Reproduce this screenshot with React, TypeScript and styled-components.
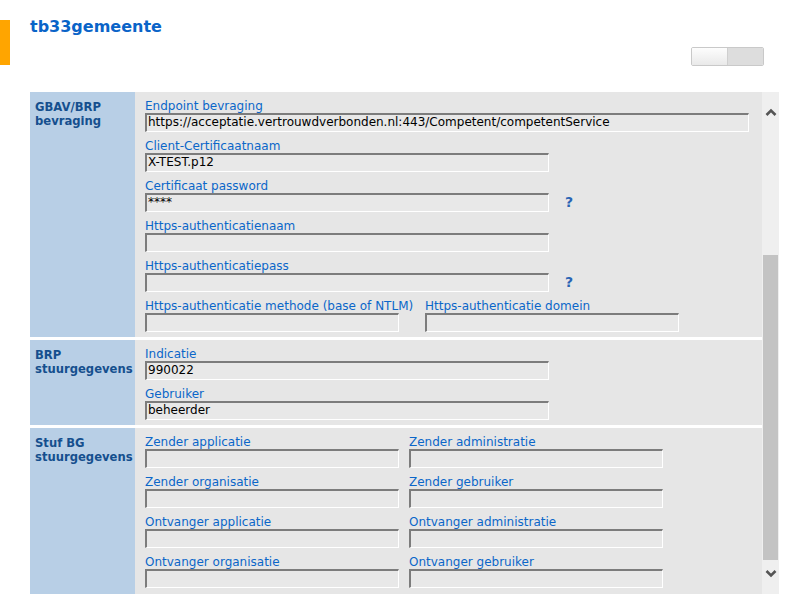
import React from "react";
import styled, { createGlobalStyle } from "styled-components";

const GlobalStyle = createGlobalStyle`
  html, body { margin: 0; padding: 0; background: #ffffff; }
  body { font-family: "DejaVu Sans", Verdana, sans-serif; }
  * { box-sizing: border-box; }
`;

const Page = styled.div`
  width: 792px;
  height: 602px;
  overflow: hidden;
  background: #ffffff;
`;

const Header = styled.div`
  display: flex;
  margin-top: 20px;
`;

const AccentBar = styled.div`
  width: 10px;
  height: 45px;
  background: #ffa500;
  flex: none;
`;

const HeaderMain = styled.div`
  flex: 1;
  display: flex;
  flex-direction: column;
  padding-left: 20px;
  padding-right: 28px;
`;

const Title = styled.h1`
  margin: -3px 0 0 0;
  font-family: "DejaVu Sans", Verdana, sans-serif;
  font-size: 16px;
  line-height: 20px;
  font-weight: bold;
  color: #0a64c8;
`;

const Toggle = styled.div`
  align-self: flex-end;
  margin-top: 10px;
  width: 73px;
  height: 19px;
  display: flex;
  border: 1px solid #c9c9c9;
  border-radius: 2px;
  overflow: hidden;
`;

const ToggleHalf = styled.div<{ $active?: boolean }>`
  flex: 1;
  background: ${(p) =>
    p.$active ? "linear-gradient(#fdfdfd, #e9e9e9)" : "#dddddd"};
  border-right: ${(p) => (p.$active ? "1px solid #cfcfcf" : "none")};
`;

const Panel = styled.div`
  margin: 26px 0 0 30px;
  width: 749px;
  height: 502px;
  display: flex;
`;

const Content = styled.div`
  flex: 1;
  display: flex;
  flex-direction: column;
  gap: 3px;
  background: #ffffff;
  overflow: hidden;
`;

const Section = styled.div<{ $grow?: boolean }>`
  display: grid;
  grid-template-columns: 105px 1fr;
  flex: ${(p) => (p.$grow ? "1" : "none")};
`;

const SectionLabel = styled.div`
  background: #b8cfe6;
  padding: 8px 0 0 5px;
  font-size: 11.6px;
  line-height: 14px;
  font-weight: bold;
  color: #154f8e;
  white-space: nowrap;
`;

const Fields = styled.div`
  background: #e6e6e6;
  padding: 6px 10px 5px 10px;
  display: flex;
  flex-direction: column;
  gap: 6px;
`;

const Row = styled.div<{ $gap?: number }>`
  display: flex;
  align-items: flex-end;
  gap: ${(p) => p.$gap ?? 0}px;
`;

const Field = styled.div<{ $width: number }>`
  width: ${(p) => p.$width}px;
  display: flex;
  flex-direction: column;
  flex: none;
`;

const FieldLabel = styled.label`
  font-size: 12px;
  line-height: 17px;
  height: 15px;
  color: #0b66c9;
  white-space: nowrap;
`;

const Input = styled.div`
  height: 19px;
  background: #e8e8e8;
  border-top: 2px solid #7c7c7c;
  border-left: 2px solid #7c7c7c;
  border-right: 1px solid #ffffff;
  border-bottom: 1px solid #ffffff;
  padding: 0 0 0 1px;
  font-size: 12px;
  line-height: 15px;
  color: #000000;
  white-space: nowrap;
  overflow: hidden;
`;

const Help = styled.span`
  margin-left: 16px;
  height: 19px;
  line-height: 19px;
  font-size: 14px;
  font-weight: bold;
  color: #2a64b4;
`;

const Scrollbar = styled.div`
  width: 17px;
  flex: none;
  background: #efefef;
  display: flex;
  flex-direction: column;
  align-items: center;
  padding: 16px 0 16px 0;
`;

const Track = styled.div`
  flex: 1;
  width: 15px;
  display: flex;
  flex-direction: column;
  justify-content: flex-end;
  padding-bottom: 8px;
`;

const Thumb = styled.div`
  height: 305px;
  background: #c3c3c3;
`;

const Chevron = ({ down }: { down?: boolean }) => (
  <svg width="12" height="10" viewBox="0 0 12 10">
    <polyline
      points={down ? "1.5,3 6,7.5 10.5,3" : "1.5,7 6,2.5 10.5,7"}
      fill="none"
      stroke="#555555"
      strokeWidth="2.6"
    />
  </svg>
);

type F = { label: string; value?: string; width: number };

const TextField = ({ label, value, width }: F) => (
  <Field $width={width}>
    <FieldLabel>{label}</FieldLabel>
    <Input>{value}</Input>
  </Field>
);

export default function App() {
  return (
    <Page>
      <GlobalStyle />
      <Header>
        <AccentBar />
        <HeaderMain>
          <Title>tb33gemeente</Title>
          <Toggle>
            <ToggleHalf $active />
            <ToggleHalf />
          </Toggle>
        </HeaderMain>
      </Header>
      <Panel>
        <Content>
          <Section>
            <SectionLabel>
              GBAV/BRP
              <br />
              bevraging
            </SectionLabel>
            <Fields>
              <Row>
                <TextField
                  label="Endpoint bevraging"
                  value="https://acceptatie.vertrouwdverbonden.nl:443/Competent/competentService"
                  width={604}
                />
              </Row>
              <Row>
                <TextField label="Client-Certificaatnaam" value="X-TEST.p12" width={404} />
              </Row>
              <Row>
                <TextField label="Certificaat password" value="****" width={404} />
                <Help>?</Help>
              </Row>
              <Row>
                <TextField label="Https-authenticatienaam" width={404} />
              </Row>
              <Row>
                <TextField label="Https-authenticatiepass" width={404} />
                <Help>?</Help>
              </Row>
              <Row $gap={26}>
                <TextField label="Https-authenticatie methode (base of NTLM)" width={254} />
                <TextField label="Https-authenticatie domein" width={254} />
              </Row>
            </Fields>
          </Section>
          <Section>
            <SectionLabel>
              BRP
              <br />
              stuurgegevens
            </SectionLabel>
            <Fields>
              <Row>
                <TextField label="Indicatie" value="990022" width={404} />
              </Row>
              <Row>
                <TextField label="Gebruiker" value="beheerder" width={404} />
              </Row>
            </Fields>
          </Section>
          <Section $grow>
            <SectionLabel>
              Stuf BG
              <br />
              stuurgegevens
            </SectionLabel>
            <Fields>
              <Row $gap={10}>
                <TextField label="Zender applicatie" width={254} />
                <TextField label="Zender administratie" width={254} />
              </Row>
              <Row $gap={10}>
                <TextField label="Zender organisatie" width={254} />
                <TextField label="Zender gebruiker" width={254} />
              </Row>
              <Row $gap={10}>
                <TextField label="Ontvanger applicatie" width={254} />
                <TextField label="Ontvanger administratie" width={254} />
              </Row>
              <Row $gap={10}>
                <TextField label="Ontvanger organisatie" width={254} />
                <TextField label="Ontvanger gebruiker" width={254} />
              </Row>
            </Fields>
          </Section>
        </Content>
        <Scrollbar>
          <Chevron />
          <Track>
            <Thumb />
          </Track>
          <Chevron down />
        </Scrollbar>
      </Panel>
    </Page>
  );
}
